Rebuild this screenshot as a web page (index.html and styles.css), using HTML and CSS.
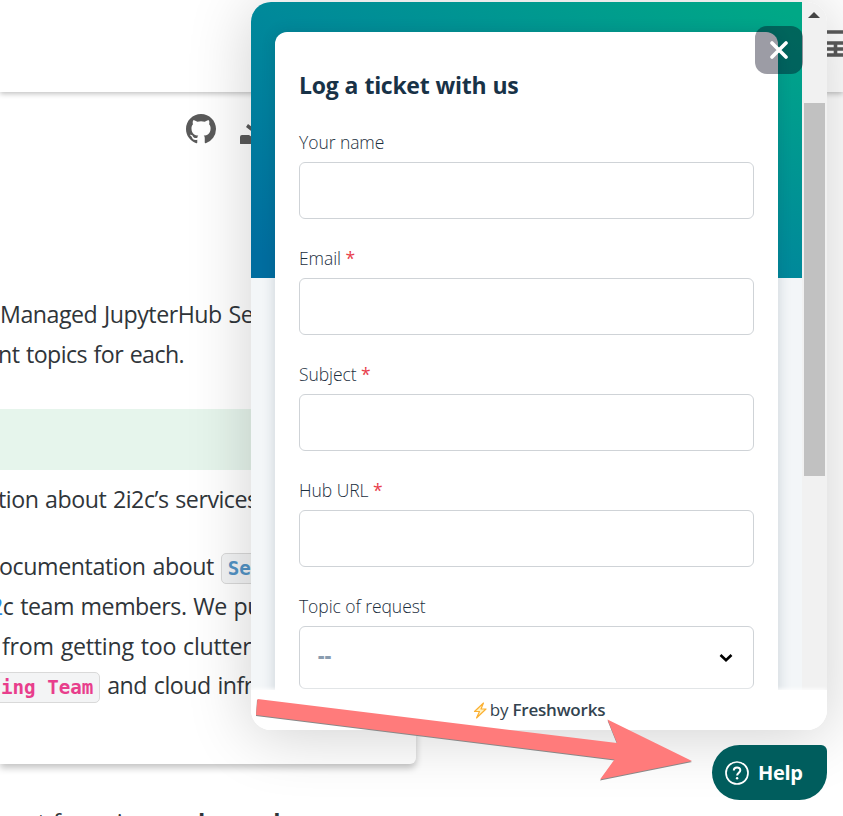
FILE: index.html
```html
<!DOCTYPE html>
<html lang="en">
<head>
<meta charset="utf-8">
<title>Managed JupyterHub Service</title>
<link rel="stylesheet" href="styles.css">
</head>
<body>
<div class="page">
  <header class="topbar">
    <svg class="menu-icon" width="24" height="28" viewBox="0 0 24 28"><path d="M0 3h24M0 14h24M0 20h24M0 26h24M16.500 13v13M1 1v27" fill="none" stroke="#5a5a5a" stroke-width="3.600"/></svg>
  </header>
  <div class="tools">
    <svg width="30" height="30" viewBox="0 0 16 16" fill="#5a5a5a"><path d="M8 0C3.580 0 0 3.580 0 8c0 3.540 2.290 6.530 5.470 7.590.4.070.55-.17.55-.38 0-.19-.01-.82-.01-1.490-2.010.37-2.530-.49-2.690-.94-.09-.23-.48-.94-.82-1.130-.28-.15-.68-.52-.01-.53.63-.01 1.080.58 1.230.82.72 1.210 1.870.87 2.330.66.070-.52.28-.87.51-1.070-1.780-.2-3.640-.89-3.640-3.950 0-.87.31-1.590.82-2.150-.08-.2-.36-1.020.08-2.120 0 0 .67-.21 2.200.82.64-.18 1.320-.27 2-.27s1.360.09 2 .27c1.530-1.040 2.200-.82 2.200-.82.44 1.100.16 1.920.08 2.120.51.56.82 1.270.82 2.150 0 3.070-1.870 3.750-3.650 3.950.29.25.54.73.54 1.480 0 1.070-.01 1.930-.01 2.200 0 .21.15.46.55.38A8.010 8.010 0 0 0 16 8c0-4.420-3.580-8-8-8z"/></svg>
    <svg width="30" height="30" viewBox="0 0 30 30" fill="#5a5a5a"><path d="M12 0h6v11h5l-8 9-9-7 2-3 4 3z"/><path d="M2 21h7l6 4 6-4h7q2 0 2 2v6q0 2-2 2H2q-2 0-2-2v-6q0-2 2-2z"/></svg>
  </div>
  <main class="article">
    <p class="line l1">Managed JupyterHub Service</p>
    <p class="line l2">nt topics for each.</p>
    <section class="note">
      <div class="note-title"></div>
      <p class="line l3">tion about 2i2c’s services</p>
      <p class="line l4">ocumentation about <code class="link">Service</code></p>
      <p class="line l5"><a>2</a>c team members. We put</p>
      <p class="line l6">from getting too cluttered</p>
      <p class="line l7"><code>ing Team</code> and cloud infra</p>
    </section>
    <p class="line l8">rt for using <b>on demand</b></p>
  </main>
</div>

<aside class="widget">
  <div class="viewport">
    <div class="banner"></div>
    <form class="card">
      <h1>Log a ticket with us</h1>
      <div class="field"><label>Your name</label><div class="input"></div></div>
      <div class="field"><label>Email <i>*</i></label><div class="input"></div></div>
      <div class="field"><label>Subject <i>*</i></label><div class="input"></div></div>
      <div class="field"><label>Hub URL <i>*</i></label><div class="input"></div></div>
      <div class="field"><label>Topic of request</label>
        <div class="input select"><span>--</span><svg width="14" height="10" viewBox="0 0 14 10"><path d="M1.500 2l5.500 5.300L12.500 2" fill="none" stroke="#000" stroke-width="2.600"/></svg></div>
      </div>
    </form>
  </div>
  <div class="scrollbar"><div class="up"></div><div class="thumb"></div></div>
  <footer>
    <svg width="14" height="17" viewBox="0 0 14 17"><path d="M10.500 1L1.500 9.500h5L3.500 16l9.500-9H8z" fill="#fff3c4" stroke="#fbb034" stroke-width="1.200" stroke-linejoin="round"/></svg>
    <span>by <b>Freshworks</b></span>
  </footer>
</aside>
<div class="close"><svg width="18" height="18" viewBox="0 0 18 18"><path d="M2 2l14 14M16 2L2 16" stroke="#fff" stroke-width="3.600" stroke-linecap="round"/></svg></div>
<div class="help">
  <svg width="24" height="24" viewBox="0 0 24 24" fill="none" stroke="#fff" stroke-width="1.700"><circle cx="12" cy="12" r="11"/><path d="M8.800 9.600c0-4.200 6.500-4.100 6.500-.3 0 2.600-3.200 2.500-3.200 5.200" stroke-width="2"/><circle cx="12.100" cy="17.200" r="1.200" fill="#fff" stroke="none"/></svg>
  <span>Help</span>
</div>
<svg class="arrow" width="442" height="84" viewBox="0 0 442 84"><path d="M6 3.500L366 47.500L356.500 24L441 65.500L349 84L363.500 64L5 19.500z" transform="translate(0 -3.500)" fill="#888"/><path d="M6.500 2.500L366 46.500L356.500 23L441 64.500L349 83L363.500 63L5 18.500z" transform="translate(0 -3.500)" fill="#ff7b7b"/></svg>
</body>
</html>
```
FILE: styles.css
```css
* { box-sizing: border-box; }
body {
  margin: 0;
  width: 843px;
  height: 816px;
  position: relative;
  overflow: hidden;
  background: #fff;
  font-family: "Open Sans", "Noto Sans", sans-serif;
  color: #2f353a;
}
.page { height: 816px; overflow: hidden; }
.topbar {
  height: 92px;
  padding: 29px 0 0 819px;
  box-shadow: 0 2px 5px #c4c4c4;
}
.menu-icon { display: block; }
.tools { display: flex; gap: 24px; padding: 22px 0 0 186px; height: 202px; }
.article { font-size: 23.200px; }
.line { margin: 0; height: 40px; line-height: 40px; white-space: pre; letter-spacing: -0.480px; word-spacing: 1.200px; }
.l2 { margin-left: -2px; letter-spacing: -0.580px; }
.note {
  width: 416px;
  height: 390px;
  border-radius: 0 0 6px 0;
  box-shadow: 0 4px 7px #c4c4c4;
  clip-path: inset(35px -20px -20px 0);
}
.note-title { height: 96px; border-top: 35px solid transparent; background: #e6f5ec; background-clip: padding-box; }
.l3 { margin: 9px 0 0 -2px; }
.l4 { margin: 27px 0 0 -1px; letter-spacing: -0.400px; }
.l5 { margin-left: -10px; }
.l5 a { color: #2e8be6; }
.l6 { margin-left: 2px; letter-spacing: -0.250px; }
.l7 { margin-top: -1px; }
.l8 { margin: 38px 0 0 28px; letter-spacing: 0; }
.l8 b { letter-spacing: -1px; }
code {
  font: bold 19.200px/29px "DejaVu Sans Mono", monospace;
  letter-spacing: 0;
  word-spacing: 0;
  color: #e83e8c;
  background: #f3f4f5;
  border: 1px solid #d9d9d9;
  border-radius: 5px;
  display: inline-block;
  height: 31px;
  padding: 0 6px;
  vertical-align: middle;
}
.l7 code { margin-left: -6px; }
code.link { color: #5293c5; }

.widget {
  position: absolute;
  left: 251px;
  top: 2px;
  width: 576px;
  height: 728px;
  border-radius: 20px;
  overflow: hidden;
  display: grid;
  grid-template: 688px 40px / 551px 25px;
  background: #fff;
  box-shadow: 0 5px 64px rgba(0, 0, 0, .19);
}
.viewport { background: #f3f6f8; overflow: hidden; display: grid; }
.banner {
  grid-area: 1 / 1;
  height: 276px;
  background: linear-gradient(26deg, #006d9f 5%, #00899a 50%, #00a886 97%);
}
.card {
  grid-area: 1 / 1;
  margin: 30px 24px 0;
  height: 720px;
  padding: 35px 24px 0;
  background: #fff;
  border-radius: 12px 12px 0 0;
  box-shadow: 0 0 14px rgba(24, 50, 71, .18);
}
h1 {
  margin: 0 0 27px;
  font-size: 23px;
  line-height: 36px;
  letter-spacing: -0.300px;
  word-spacing: 0.600px;
  color: #183247;
  white-space: nowrap;
}
.field { height: 116px; color: #1c2f3e; }
label { display: block; height: 32px; line-height: 24px; font-size: 17.500px; font-weight: 300; letter-spacing: -0.060px; }
label i { color: #e8404c; font-style: normal; font-weight: 400; }
.input { height: 57px; border: 1px solid #cfd3d7; border-radius: 6px; }
.select { height: 63px; display: flex; align-items: center; justify-content: space-between; padding: 0 20px 0 18px; color: #8a9caf; font-weight: 800; font-size: 20px; }
.select span { margin-top: -4px; letter-spacing: 0.300px; }
.scrollbar { background: #f1f1f1; padding: 10px 2px 0; }
.up { width: 0; height: 0; margin: 0 0 85px 4px; border: 6px solid transparent; border-top: 0; border-bottom-color: #444; }
.thumb { height: 373px; background: #c1c1c1; }
footer {
  grid-column: 1 / 3;
  display: flex;
  justify-content: center;
  align-items: center;
  gap: 3px;
  font-size: 17px;
  letter-spacing: -0.200px;
  color: #33434f;
  background: #fff;
  box-shadow: 0 -1px 4px #fff;
  z-index: 1;
}
footer span { margin-top: -2px; }
footer b { font-weight: 600; }
.close {
  position: absolute;
  left: 755px;
  top: 26px;
  width: 48px;
  height: 48px;
  border-radius: 12px;
  background: rgba(0, 0, 24, .39);
  display: flex;
  align-items: center;
  justify-content: center;
}
.help {
  position: absolute;
  left: 712px;
  top: 745px;
  width: 115px;
  height: 55px;
  border-radius: 28px 6px 28px 28px;
  background: #005d5d;
  color: #fff;
  display: flex;
  align-items: center;
  gap: 9px;
  padding-left: 13px;
  font-size: 20px;
  font-weight: 700;
  letter-spacing: -0.300px;
}
.arrow { position: absolute; left: 251px; top: 700px; z-index: 5; overflow: visible; }
```
